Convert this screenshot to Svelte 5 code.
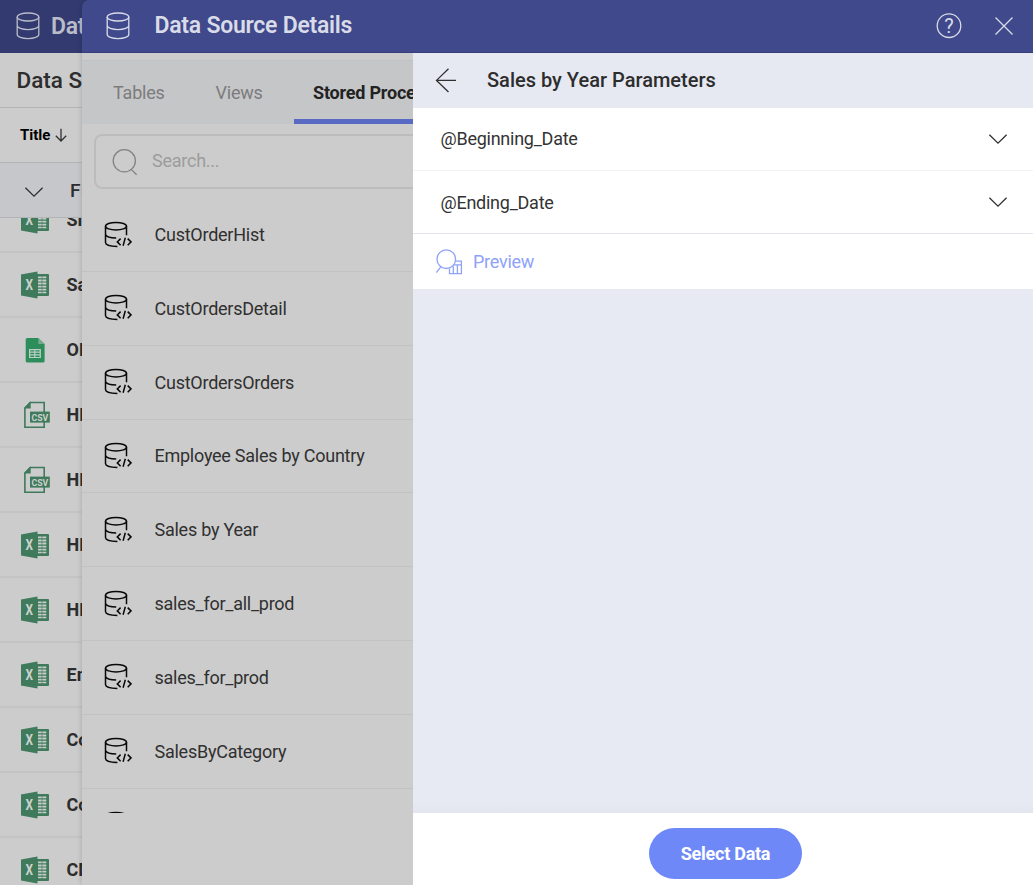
<script>
  const files = [
    { kind: 'xls', name: 'Simple' },
    { kind: 'xls', name: 'Sales' },
    { kind: 'sheet', name: 'OKRs' },
    { kind: 'csv', name: 'HR' },
    { kind: 'csv', name: 'HR' },
    { kind: 'xls', name: 'HR' },
    { kind: 'xls', name: 'HR' },
    { kind: 'xls', name: 'Employees' },
    { kind: 'xls', name: 'Countries' },
    { kind: 'xls', name: 'Companies' },
    { kind: 'xls', name: 'CMS' }
  ];
  const procedures = [
    'CustOrderHist', 'CustOrdersDetail', 'CustOrdersOrders', 'Employee Sales by Country',
    'Sales by Year', 'sales_for_all_prod', 'sales_for_prod', 'SalesByCategory', 'Ten Most Expensive Products'
  ];
  const parameters = ['@Beginning_Date', '@Ending_Date'];
</script>

{#snippet database()}
  <svg class="database" width="24" height="28" viewBox="0 0 24 28">
    <ellipse cx="12" cy="5" rx="10.8" ry="4" />
    <path d="M1.2 5V22.6C1.2 24.8 6 26.6 12 26.6S22.8 24.8 22.8 22.6V5M1.2 13.6C1.2 15.8 6 17.6 12 17.6S22.8 15.8 22.8 13.6" />
  </svg>
{/snippet}

{#snippet chevron()}
  <svg class="line" width="20" height="12" viewBox="0 0 20 12"><path d="M1.4 1.7 10 10.2 18.6 1.7" /></svg>
{/snippet}

{#snippet fileIcon(kind)}
  {#if kind === 'xls'}
    <svg class="file" width="28" height="28" viewBox="0 0 28 28">
      <rect x="15" y="3" width="13" height="22" rx="1" fill="#3e7a5b" />
      <path d="M17 5.5h3.7v1.8H17zM21.3 5.5h4v1.8h-4zM17 8.5h3.7v1.9H17zM21.3 8.5h4v1.9h-4zM17 11.6h3.7v1.9H17zM21.3 11.6h4v1.9h-4zM17 14.7h3.7v1.9H17zM21.3 14.7h4v1.9h-4zM17 17.8h3.7v1.8H17zM21.3 17.8h4v1.8h-4zM17 20.7h3.7v1.6H17zM21.3 20.7h4v1.6h-4z" fill="#c9cdca" />
      <path d="M0 3.4 16.5.5v27L0 24.6Z" fill="#3e7a5b" />
      <text x="4.6" y="19.2" font-size="15" textLength="7.5" lengthAdjust="spacingAndGlyphs">X</text>
    </svg>
  {:else if kind === 'sheet'}
    <svg class="file" width="28" height="28" viewBox="0 0 28 28">
      <path d="M6.3 2H17.3L23.6 8V25a1.6 1.6 0 0 1-1.6 1.6H6.3A1.6 1.6 0 0 1 4.7 25V3.6A1.6 1.6 0 0 1 6.3 2Z" fill="#2d8e5c" />
      <path d="M17.3 2 23.6 8H17.3Z" fill="#75aa8d" />
      <path d="M8.6 13.6H19.3V21.5H8.6ZM8.6 16.2H19.3M8.6 18.9H19.3M13.8 13.6V21.5" fill="none" stroke="#bdcfc5" stroke-width="1.2" />
    </svg>
  {:else}
    <svg class="file csv" width="28" height="28" viewBox="0 0 28 28">
      <path d="M9.3 1.5H23.2V26.2H3.9V7.1Z" fill="none" stroke="#3e7a5b" stroke-width="1.6" />
      <path d="M3.2 7.6V7L8.9.8h.8V7.6Z" fill="#3e7a5b" />
      <rect x="9" y="10.6" width="19.8" height="11" fill="#3e7a5b" />
      <text x="10.6" y="19.6" font-size="9.8" textLength="16.7" lengthAdjust="spacingAndGlyphs">CSV</text>
    </svg>
  {/if}
{/snippet}

<div class="app">
  <aside class="sources">
    <header>{@render database()}<span>Data</span></header>
    <h2>Data Sources</h2>
    <div class="column-title">
      Title
      <svg class="line" width="14" height="14" viewBox="0 0 14 14"><path d="M7 .8V13M1.8 7.8 7 13 12.2 7.8" /></svg>
    </div>
    <div class="group">{@render chevron()}<span>Files</span></div>
    <div class="files">
      {#each files as file}
        <div class="file-row">{@render fileIcon(file.kind)}<span>{file.name}</span></div>
      {/each}
    </div>
  </aside>

  <section class="details">
    <header>
      {@render database()}
      <span class="heading">Data Source Details</span>
      <svg class="help" width="26" height="26" viewBox="0 0 26 26">
        <circle cx="13" cy="12.7" r="11.8" />
        <text x="13" y="19.5" text-anchor="middle" font-size="20">?</text>
      </svg>
      <svg class="close" width="20" height="20" viewBox="0 0 20 20"><path d="M1.5 1.5 18.5 18.5M18.5 1.5 1.5 18.5" /></svg>
    </header>

    <div class="panes">
      <div class="procedures">
        <nav>
          <span class="tab first">Tables</span>
          <span class="tab second">Views</span>
          <span class="tab active">Stored Procedures</span>
        </nav>
        <div class="search">
          <svg width="26" height="28" viewBox="0 0 26 28"><circle cx="12.3" cy="12.8" r="11.1" /><path d="M19.2 21.4 24.6 26.8" /></svg>
          <span>Search...</span>
        </div>
        <div class="list">
          {#each procedures as name}
            <div class="procedure">
              <svg width="28" height="28" viewBox="0 0 28 28">
                <ellipse cx="12" cy="5.2" rx="10.5" ry="3.8" />
                <path d="M1.5 5.2V21.6C1.5 23.9 6 25.4 13.4 25.5M22.5 5.2V14.3M1.5 13.4C2.3 15.5 6 16.8 12.2 16.9" />
                <path d="M16.6 17.6 13.3 20.9 16.6 24.2M23.7 17.6 27 20.9 23.7 24.2M21.3 16.8 19.1 24.8" />
              </svg>
              <span>{name}</span>
            </div>
          {/each}
        </div>
      </div>

      <div class="parameters">
        <div class="title">
          <svg class="line" width="22" height="26" viewBox="0 0 22 26"><path d="M21 13.4H1.5M13.5 1.8 1.5 13.4 13.5 25" /></svg>
          <span>Sales by Year Parameters</span>
        </div>
        {#each parameters as parameter}
          <div class="parameter"><span>{parameter}</span>{@render chevron()}</div>
        {/each}
        <div class="preview">
          <svg width="27" height="26" viewBox="0 0 27 26">
            <circle cx="10.3" cy="10.2" r="9.3" />
            <path d="M4.6 18.2.4 23.6M13.5 19.3V24.6H25.4V12.1H20M17.3 17.3V24.6M21.4 15.8V24.6M17.3 15.8H25.4" />
          </svg>
          <span>Preview</span>
        </div>
        <div class="empty"></div>
        <footer><button>Select Data</button></footer>
      </div>
    </div>
  </section>
</div>

<style>
  :global(body) { margin: 0; background: #ccc; }
  * { box-sizing: border-box; }
  svg { display: block; flex: none; }
  span { white-space: nowrap; }
  .app {
    display: grid;
    grid-template-columns: 82px 951px;
    width: 1033px;
    height: 885px;
    overflow: hidden;
    background: linear-gradient(#323a70 53px, #ccc 53px);
    font: 18px Roboto, sans-serif;
    color: #2d2d2d;
  }
  .sources { width: 82px; height: 885px; overflow: hidden; display: flex; flex-direction: column; }
  header { display: flex; align-items: center; height: 53px; flex: none; font-size: 23px; font-weight: 600; letter-spacing: -.25px; }
  .sources header { background: #323a70; color: #babcc8; padding: 0 0 1px 16px; gap: 11px; border-radius: 6px 0 0; }
  .database { fill: none; stroke: currentColor; stroke-width: 1.3; }
  .line { fill: none; stroke: #303030; stroke-width: 1.3; }
  h2 { margin: 0; height: 55px; flex: none; padding-left: 16.5px; font-size: 22.5px; line-height: 54px; font-weight: 500; white-space: nowrap; border-bottom: 1px solid #b3b4b7; }
  .column-title { display: flex; align-items: center; gap: 4px; height: 55px; flex: none; padding-left: 20px; font-size: 15px; font-weight: 700; color: #000; border-bottom: 1px solid #b3b4b7; }
  .group { display: flex; align-items: center; height: 55px; flex: none; gap: 26px; padding-left: 24px; font-size: 19px; font-weight: 500; letter-spacing: .6px; background: #c5c7ca; border-bottom: 1px solid #b3b4b7; }
  .group svg { margin-top: 3px; }
  .files { flex: 1; min-height: 0; overflow: hidden; }
  .file-row { display: flex; align-items: center; gap: 17.5px; height: 65px; padding-left: 21px; font-weight: 700; font-size: 18px; border-bottom: 2px solid #c3c4c6; }
  .file-row:first-child { margin-top: -30px; }
  .file text { font-family: Roboto, sans-serif; font-weight: 700; fill: #ccd1ce; }
  .csv { overflow: visible; }

  .details { display: flex; flex-direction: column; height: 885px; min-width: 0; box-shadow: -1px 0 5px rgba(0, 0, 0, .13); border-radius: 7px 0 0; }
  .details header { background: #3f498b; color: #d9dbe8; padding: 0 19px 0 24px; border-radius: 7px 0 0; border-bottom: 1px solid #373f7b; }
  .heading { margin-left: 24.5px; flex: 1; padding-bottom: 1px; }
  .help, .close { fill: none; stroke: #d9dbe8; stroke-width: 1.3; }
  .help { margin-right: 32px; }
  .help text { fill: #d9dbe8; stroke: none; font-family: Roboto, sans-serif; font-weight: 400; letter-spacing: 0; }
  .panes { display: grid; grid-template-columns: 331px 620px; flex: 1; min-height: 0; }
  .procedures { display: flex; flex-direction: column; width: 331px; min-height: 0; overflow: hidden; background: #ccc; padding-top: 7px; }
  nav { display: flex; height: 64px; flex: none; background: #c5c6c8; border-top: 1px solid #c0c1c2; color: #7c7c7d; }
  .tab { line-height: 64px; flex: none; letter-spacing: -.2px; }
  .first { width: 102.5px; margin-left: 31px; }
  .second { width: 78.5px; }
  .active { padding: 0 19px; color: #222; font-weight: 700; border-bottom: 5px solid #586ac4; }
  .search { display: flex; align-items: center; gap: 14px; width: 400px; height: 55px; flex: none; margin: 10px 0 0 12px; padding-left: 16px; border: 2px solid #bbbcbe; border-radius: 8px; color: #9c9c9c; letter-spacing: -.25px; }
  .search svg { fill: none; stroke: #838383; stroke-width: 1.3; }
  .search span { padding-bottom: 2px; }
  .list { height: 615px; flex: none; overflow: hidden; margin-top: 9.2px; }
  .procedure { display: flex; align-items: center; gap: 21.5px; height: 73.8px; padding-left: 23px; border-bottom: 1px solid #c0c2c4; color: #303030; letter-spacing: -.25px; }
  .procedure svg { margin-left: -.6px; margin-right: .6px; fill: none; stroke: #080808; stroke-width: 1.5; }

  .parameters { display: flex; flex-direction: column; min-height: 0; background: #fff; }
  .title { display: flex; align-items: center; gap: 30px; height: 55px; flex: none; padding: 0 0 2px 22px; background: #e7e9f2; font-size: 20px; font-weight: 500; }
  .parameter { display: flex; align-items: center; justify-content: space-between; height: 63px; flex: none; padding: 0 25px 1px 27.5px; border-bottom: 1px solid #f1f2f5; color: #333; letter-spacing: -.25px; }
  .parameter + .parameter { padding-bottom: 0; border-color: #e3e5ee; }
  .preview { display: flex; align-items: center; gap: 10px; height: 55px; flex: none; padding-left: 23px; color: #8ea2f8; letter-spacing: -.25px; }
  .preview svg { fill: none; stroke: #8ea2f8; stroke-width: 1.3; }
  .empty { flex: 1; background: linear-gradient(#e7eaf3 calc(100% - 12px), #e3e6ed); }
  footer { display: flex; justify-content: center; height: 72px; padding: 15px 0 0 5px; background: #fff; }
  button { width: 153px; height: 51px; padding: 0; border: 0; border-radius: 26px; background: #6e89f7; color: #fff; font: 700 18px Roboto, sans-serif; letter-spacing: -.25px; }
</style>
